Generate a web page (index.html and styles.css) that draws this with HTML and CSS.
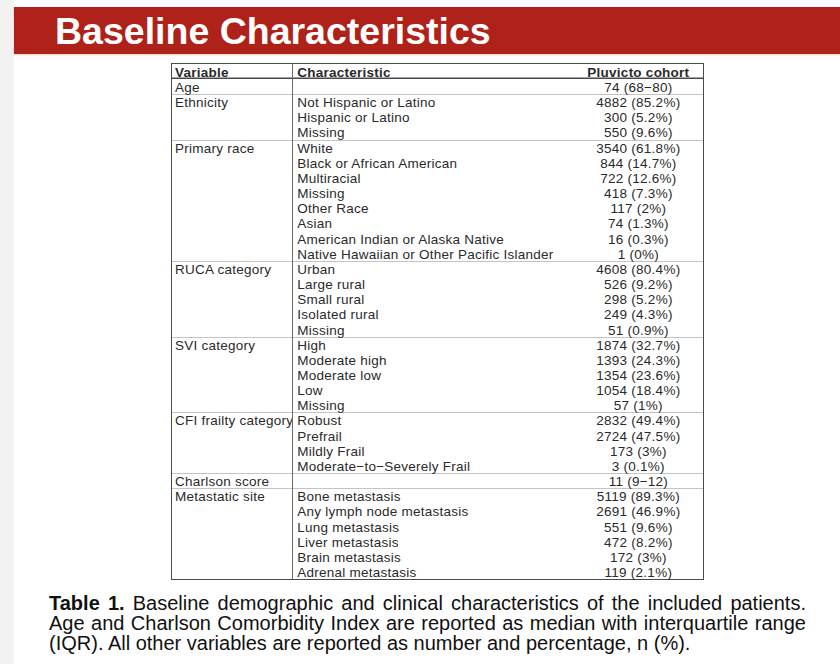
FILE: index.html
```html
<!DOCTYPE html>
<html lang="en">

<head>
    <meta charset="UTF-8" />
    <meta name="viewport" content="width=device-width, initial-scale=1.0" />
    <title>Baseline Characteristics</title>

    <link rel="stylesheet" href="styles.css">
</head>

<body>
    <div class="edge"></div>
    <main class="page">
        <header class="banner">
            <h1>Baseline Characteristics</h1>
        </header>

        <table class="baseline">
            <thead>
                <tr>
                    <th class="var">Variable</th>
                    <th class="char">Characteristic</th>
                    <th class="val">Pluvicto cohort</th>
                </tr>
            </thead>
            <tbody>
                <tr>
                    <td class="var">Age</td>
                    <td class="char"></td>
                    <td class="val">74 (68&minus;80)</td>
                </tr>
            </tbody>
            <tbody>
                <tr><td class="var" rowspan="3">Ethnicity</td><td class="char">Not Hispanic or Latino</td><td class="val">4882 (85.2%)</td></tr>
                <tr><td class="char">Hispanic or Latino</td><td class="val">300 (5.2%)</td></tr>
                <tr><td class="char">Missing</td><td class="val">550 (9.6%)</td></tr>
            </tbody>
            <tbody>
                <tr><td class="var" rowspan="8">Primary race</td><td class="char">White</td><td class="val">3540 (61.8%)</td></tr>
                <tr><td class="char">Black or African American</td><td class="val">844 (14.7%)</td></tr>
                <tr><td class="char">Multiracial</td><td class="val">722 (12.6%)</td></tr>
                <tr><td class="char">Missing</td><td class="val">418 (7.3%)</td></tr>
                <tr><td class="char">Other Race</td><td class="val">117 (2%)</td></tr>
                <tr><td class="char">Asian</td><td class="val">74 (1.3%)</td></tr>
                <tr><td class="char">American Indian or Alaska Native</td><td class="val">16 (0.3%)</td></tr>
                <tr><td class="char">Native Hawaiian or Other Pacific Islander</td><td class="val">1 (0%)</td></tr>
            </tbody>
            <tbody>
                <tr><td class="var" rowspan="5">RUCA category</td><td class="char">Urban</td><td class="val">4608 (80.4%)</td></tr>
                <tr><td class="char">Large rural</td><td class="val">526 (9.2%)</td></tr>
                <tr><td class="char">Small rural</td><td class="val">298 (5.2%)</td></tr>
                <tr><td class="char">Isolated rural</td><td class="val">249 (4.3%)</td></tr>
                <tr><td class="char">Missing</td><td class="val">51 (0.9%)</td></tr>
            </tbody>
            <tbody>
                <tr><td class="var" rowspan="5">SVI category</td><td class="char">High</td><td class="val">1874 (32.7%)</td></tr>
                <tr><td class="char">Moderate high</td><td class="val">1393 (24.3%)</td></tr>
                <tr><td class="char">Moderate low</td><td class="val">1354 (23.6%)</td></tr>
                <tr><td class="char">Low</td><td class="val">1054 (18.4%)</td></tr>
                <tr><td class="char">Missing</td><td class="val">57 (1%)</td></tr>
            </tbody>
            <tbody>
                <tr><td class="var" rowspan="4"><div class="clip">CFI frailty category</div></td><td class="char">Robust</td><td class="val">2832 (49.4%)</td></tr>
                <tr><td class="char">Prefrail</td><td class="val">2724 (47.5%)</td></tr>
                <tr><td class="char">Mildly Frail</td><td class="val">173 (3%)</td></tr>
                <tr><td class="char">Moderate&minus;to&minus;Severely Frail</td><td class="val">3 (0.1%)</td></tr>
            </tbody>
            <tbody>
                <tr><td class="var">Charlson score</td><td class="char"></td><td class="val">11 (9&minus;12)</td></tr>
            </tbody>
            <tbody>
                <tr><td class="var" rowspan="6">Metastatic site</td><td class="char">Bone metastasis</td><td class="val">5119 (89.3%)</td></tr>
                <tr><td class="char">Any lymph node metastasis</td><td class="val">2691 (46.9%)</td></tr>
                <tr><td class="char">Lung metastasis</td><td class="val">551 (9.6%)</td></tr>
                <tr><td class="char">Liver metastasis</td><td class="val">472 (8.2%)</td></tr>
                <tr><td class="char">Brain metastasis</td><td class="val">172 (3%)</td></tr>
                <tr><td class="char">Adrenal metastasis</td><td class="val">119 (2.1%)</td></tr>
            </tbody>
        </table>

        <p class="caption">
            <span class="line"><b>Table 1.</b> Baseline demographic and clinical characteristics of the included patients.</span>
            <span class="line">Age and Charlson Comorbidity Index are reported as median with interquartile range</span>
            <span class="line last">(IQR). All other variables are reported as number and percentage, n (%).</span>
        </p>
    </main>
</body>

</html>
```

FILE: styles.css
```css
* {
    margin: 0;
    padding: 0;
    box-sizing: border-box;
}

html {
    font-family: "Liberation Sans", Arial, sans-serif;
}

body {
    background: #fff;
    display: flex;
    height: 100vh;
    overflow: hidden;
    width: 100%;
}

.edge {
    background-color: #f2f2f2;
    flex: 0 0 14px;
}

.page {
    flex: 1;
    padding-top: 7px;
}

.banner {
    align-items: center;
    background-color: #ae2219;
    box-shadow: 0 1px 2px rgba(200, 90, 80, 0.35);
    display: flex;
    height: 47px;
    padding-left: 41px;
}

.banner h1 {
    color: #fff;
    font-size: 37.5px;
    font-weight: 700;
    line-height: 1;
    padding-top: 2px;
}

.baseline {
    border: 1.5px solid #4a4a4a;
    border-collapse: separate;
    border-spacing: 0;
    color: #2a2a2a;
    font-size: 13.5px;
    letter-spacing: 0.25px;
    margin: 9px 0 0 157px;
    table-layout: fixed;
    width: 533px;
}

.baseline th,
.baseline td {
    height: 15.15px;
    line-height: 13.15px;
    padding: 2px 0 0;
    vertical-align: top;
    white-space: nowrap;
}

.baseline th {
    box-shadow: inset 0 -1.5px #4a4a4a;
    font-weight: 700;
    height: 15px;
    line-height: 13px;
}

.baseline tbody + tbody tr:first-child td {
    box-shadow: inset 0 1px #c4c4c4;
}

.baseline .var {
    border-right: 1px solid #6a6a6a;
    padding-left: 3px;
    text-align: left;
    width: 121px;
}

.baseline .char {
    padding-left: 4px;
    text-align: left;
    width: 280px;
}

.baseline .val {
    text-align: center;
    width: 129px;
}

.clip {
    overflow: hidden;
}

.caption {
    color: #111;
    font-size: 20px;
    line-height: 20px;
    margin: 13px 0 0 35px;
    width: 757px;
}

.line {
    display: block;
    text-align: justify;
    text-align-last: justify;
}

.line.last {
    text-align-last: left;
}
```
